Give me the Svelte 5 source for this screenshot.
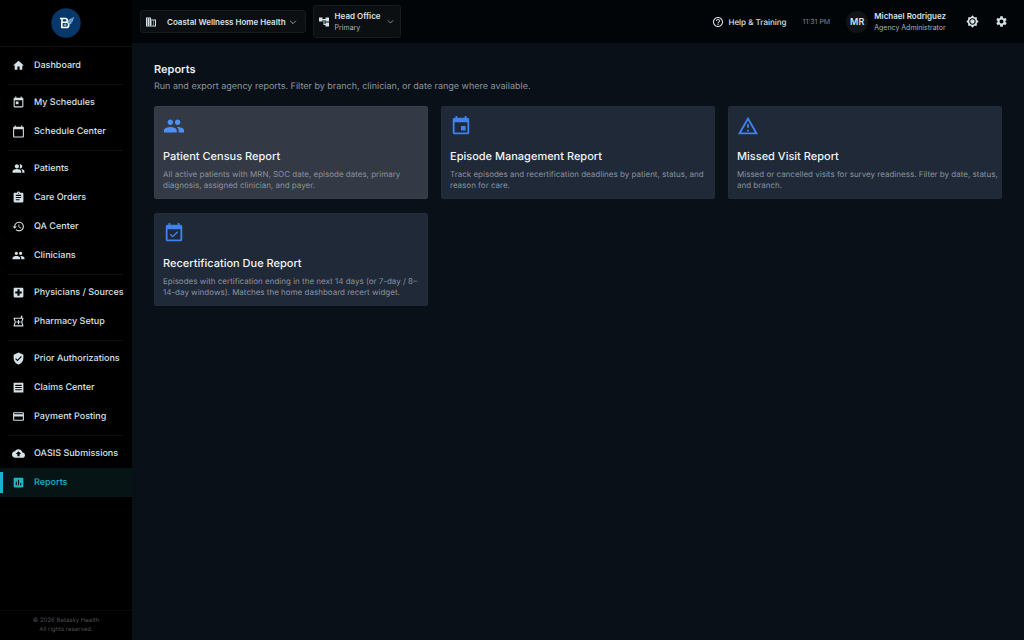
<script>
  const icons = {
    home: 'M10 20v-6h4v6h5v-8h3L12 3 2 12h3v8z',
    today: 'M19 3h-1V1h-2v2H8V1H6v2H5c-1.11 0-1.99.9-1.99 2L3 19c0 1.1.89 2 2 2h14c1.1 0 2-.9 2-2V5c0-1.100-.9-2-2-2zm0 16H5V8h14v11zM7 10h5v5H7z',
    calendar: 'M20 3h-1V1h-2v2H7V1H5v2H4c-1.100 0-2 .9-2 2v16c0 1.100.9 2 2 2h16c1.100 0 2-.9 2-2V5c0-1.100-.9-2-2-2zm0 18H4V8h16v13z',
    patients: 'M16.670 13.130C18.040 14.060 19 15.320 19 17v3h4v-3c0-2.180-3.570-3.470-6.330-3.870zM15 12c2.210 0 4-1.790 4-4s-1.790-4-4-4c-.47 0-.91.1-1.330.24C14.500 5.270 15 6.580 15 8s-.5 2.730-1.330 3.760c.42.14.86.24 1.330.24zM9 12c2.210 0 4-1.790 4-4s-1.790-4-4-4-4 1.790-4 4 1.790 4 4 4zm0 1c-2.670 0-8 1.340-8 4v3h16v-3c0-2.660-5.330-4-8-4z',
    orders: 'M19 3h-4.180C14.400 1.840 13.300 1 12 1c-1.300 0-2.400.84-2.820 2H5c-1.100 0-2 .9-2 2v14c0 1.100.9 2 2 2h14c1.100 0 2-.9 2-2V5c0-1.100-.9-2-2-2zm-7 0c.55 0 1 .45 1 1s-.45 1-1 1-1-.45-1-1 .45-1 1-1zm2 14H7v-2h7v2zm3-4H7v-2h10v2zm0-4H7V7h10v2z',
    history: 'M13 3c-4.970 0-9 4.030-9 9H1l3.890 3.890.07.14L9 12H6c0-3.870 3.130-7 7-7s7 3.130 7 7-3.130 7-7 7c-1.930 0-3.680-.79-4.940-2.060l-1.420 1.420C8.270 19.990 10.510 21 13 21c4.970 0 9-4.030 9-9s-4.030-9-9-9zm-1 5v5l4.280 2.540.72-1.210-3.500-2.080V8H12z',
    people: 'M16 11c1.660 0 2.990-1.340 2.990-3S17.660 5 16 5c-1.660 0-3 1.340-3 3s1.340 3 3 3zm-8 0c1.660 0 2.990-1.340 2.990-3S9.660 5 8 5C6.340 5 5 6.340 5 8s1.340 3 3 3zm0 2c-2.330 0-7 1.170-7 3.500V19h14v-2.500c0-2.330-4.670-3.500-7-3.500zm8 0c-.29 0-.62.02-.97.05 1.160.84 1.970 1.970 1.970 3.450V19h6v-2.500c0-2.330-4.670-3.500-7-3.500z',
    hospital: 'M19 3H5c-1.100 0-1.990.9-1.990 2L3 19c0 1.100.9 2 2 2h14c1.100 0 2-.9 2-2V5c0-1.100-.9-2-2-2zm-1 11h-4v4h-4v-4H6v-4h4V6h4v4h4v4z',
    pharmacy: 'M21 5h-2.640l1.140-3.140L17.150 1l-1.460 4H3v2l2 6-2 6v2h18v-2l-2-6 2-6V5zm-3.900 8.630L18.890 19H5.110l1.790-5.370.21-.63-.21-.63L5.110 7h13.780l-1.790 5.370-.21.63.21.63zM13 9h-2v3H8v2h3v3h2v-3h3v-2h-3z',
    verified: 'M12 1L3 5v6c0 5.550 3.840 10.740 9 12 5.160-1.260 9-6.450 9-12V5l-9-4zm-2 16l-4-4 1.410-1.410L10 14.170l6.590-6.590L18 9l-8 8z',
    claims: 'M3 3v18h18V3H3zm15 14H6v-2h12v2zm0-4H6v-2h12v2zm0-4H6V7h12v2z',
    card: 'M20 4H4c-1.110 0-1.990.89-1.990 2L2 18c0 1.110.89 2 2 2h16c1.110 0 2-.89 2-2V6c0-1.110-.89-2-2-2zm0 14H4v-6h16v6zm0-10H4V6h16v2z',
    upload: 'M19.350 10.040C18.670 6.590 15.640 4 12 4 9.110 4 6.600 5.640 5.350 8.040 2.340 8.360 0 10.910 0 14c0 3.310 2.690 6 6 6h13c2.760 0 5-2.240 5-5 0-2.640-2.050-4.780-4.650-4.960zM14 13v4h-4v-4H7l5-5 5 5h-3z',
    reports: 'M19 3H5c-1.100 0-2 .9-2 2v14c0 1.100.9 2 2 2h14c1.100 0 2-.9 2-2V5c0-1.100-.9-2-2-2zM9 17H7v-7h2v7zm4 0h-2V7h2v10zm4 0h-2v-4h2v4z',
    business: 'M12 7V3H2v18h20V7H12zM6 19H4v-2h2v2zm0-4H4v-2h2v2zm0-4H4V9h2v2zm0-4H4V5h2v2zm4 12H8v-2h2v2zm0-4H8v-2h2v2zm0-4H8V9h2v2zm0-4H8V5h2v2zm10 12h-8v-2h2v-2h-2v-2h2v-2h-2V9h8v10zm-2-8h-2v2h2v-2zm0 4h-2v2h2v-2z',
    tree: 'M22 11V3h-7v3H9V3H2v8h7V8h2v10h4v3h7v-8h-7v3h-2V8h2v3z',
    chevron: 'M5 9l7 7 7-7',
    help: 'M11 18h2v-2h-2v2zm1-16C6.480 2 2 6.480 2 12s4.480 10 10 10 10-4.480 10-10S17.520 2 12 2zm0 18c-4.410 0-8-3.590-8-8s3.590-8 8-8 8 3.590 8 8-3.590 8-8 8zm0-14c-2.210 0-4 1.790-4 4h2c0-1.100.9-2 2-2s2 .9 2 2c0 2-3 1.750-3 5h2c0-2.250 3-2.500 3-5 0-2.210-1.790-4-4-4z',
    sun: 'M20 8.690V4h-4.690L12 .69 8.690 4H4v4.690L.69 12 4 15.310V20h4.690L12 23.310 15.310 20H20v-4.690L23.310 12 20 8.690zM12 18c-3.310 0-6-2.690-6-6s2.690-6 6-6 6 2.690 6 6-2.690 6-6 6zm0-10c-2.210 0-4 1.790-4 4s1.790 4 4 4 4-1.790 4-4-1.790-4-4-4z',
    gear: 'M19.140 12.940c.04-.3.06-.61.06-.94 0-.32-.02-.64-.07-.94l2.030-1.580c.18-.14.23-.41.12-.61l-1.920-3.320c-.12-.22-.37-.29-.59-.22l-2.390.96c-.5-.38-1.030-.7-1.620-.94l-.36-2.540c-.04-.24-.24-.41-.48-.41h-3.840c-.24 0-.43.17-.47.41l-.36 2.540c-.59.24-1.130.57-1.620.94l-2.390-.96c-.22-.08-.47 0-.59.22L2.740 8.870c-.12.21-.08.47.12.61l2.030 1.580c-.05.3-.09.63-.09.94s.02.64.07.94l-2.030 1.580c-.18.14-.23.41-.12.61l1.920 3.320c.12.22.37.29.59.22l2.390-.96c.5.38 1.030.7 1.620.94l.36 2.540c.05.24.24.41.48.41h3.840c.24 0 .44-.17.47-.41l.36-2.540c.59-.24 1.130-.56 1.620-.94l2.390.96c.22.08.47 0 .59-.22l1.920-3.320c.12-.22.07-.47-.12-.61l-2.010-1.580zM12 15.600c-1.980 0-3.600-1.620-3.600-3.600s1.620-3.600 3.600-3.600 3.600 1.620 3.600 3.600-1.620 3.600-3.600 3.600z',
    event: 'M17 12h-5v5h5v-5zM16 1v2H8V1H6v2H5c-1.110 0-1.990.9-1.990 2L3 19c0 1.100.89 2 2 2h14c1.100 0 2-.9 2-2V5c0-1.100-.9-2-2-2h-1V1h-2zm3 18H5V8h14v11z',
    warning: 'M12 5.990L19.530 19H4.470L12 5.990M12 2L1 21h22L12 2zm1 14h-2v2h2v-2zm0-6h-2v4h2v-4z',
    available: 'M16.530 11.060L15.470 10l-4.880 4.880-2.120-2.120-1.060 1.060L10.590 17l5.940-5.940zM19 3h-1V1h-2v2H8V1H6v2H5c-1.110 0-1.990.9-1.990 2L3 19c0 1.100.89 2 2 2h14c1.100 0 2-.9 2-2V5c0-1.100-.9-2-2-2zm0 16H5V8h14v11z'
  };

  const groups = [
    [['home', 'Dashboard']],
    [['today', 'My Schedules'], ['calendar', 'Schedule Center']],
    [['patients', 'Patients'], ['orders', 'Care Orders'], ['history', 'QA Center'], ['people', 'Clinicians']],
    [['hospital', 'Physicians / Sources'], ['pharmacy', 'Pharmacy Setup']],
    [['verified', 'Prior Authorizations'], ['claims', 'Claims Center'], ['card', 'Payment Posting']],
    [['upload', 'OASIS Submissions'], ['reports', 'Reports']]
  ];

  const reports = [
    { icon: 'people', title: 'Patient Census Report', text: 'All active patients with MRN, SOC date, episode dates, primary diagnosis, assigned clinician, and payer.' },
    { icon: 'event', title: 'Episode Management Report', text: 'Track episodes and recertification deadlines by patient, status, and reason for care.' },
    { icon: 'warning', title: 'Missed Visit Report', text: 'Missed or cancelled visits for survey readiness. Filter by date, status, and branch.' },
    { icon: 'available', title: 'Recertification Due Report', text: 'Episodes with certification ending in the next 14 days (or 7-day / 8–14-day windows). Matches the home dashboard recert widget.' }
  ];

  let current = $state('Reports');
  let focused = $state('Patient Census Report');
</script>

{#snippet icon(name, size)}
  <svg class:line={name === 'chevron'} viewBox="0 0 24 24" width={size} height={size} fill="currentColor" aria-hidden="true"><path d={icons[name]} /></svg>
{/snippet}

<div class="app">
  <aside>
    <a class="brand" href="#home" aria-label="Home">
      <svg viewBox="0 0 30 30" width="30" height="30" aria-hidden="true">
        <circle cx="15" cy="15" r="14.700" fill="#08376a" />
        <g fill="none" stroke="#fff" stroke-width="1.600" stroke-linejoin="round">
          <path d="M9 10.500h5.500c2.300 0 2.300 3.800 0 3.800h-3.500v-3.800M11 14.300h4.500c3 0 3 5.200 0 5.200h-4.700v-5.200" />
        </g>
        <path d="M14.200 15.500v3M12.700 17h3" stroke="#b9dcf5" stroke-width=".8" />
        <path d="M16.300 14.200c1-2.600 3.200-3.400 6.700-5.200-.2 1.700-.8 2.700-2 3.400l1.300-.1c-.6 1.400-1.400 2-2.600 2.300l1 .1c-.7 1.200-1.900 1.600-3.200 1.500z" fill="#8cc4ea" />
        <path d="M17.400 14l4.300-3.700M18 15l3-2.500" stroke="#08376a" stroke-width=".5" />
      </svg>
    </a>
    <nav aria-label="Main">
      {#each groups as group}
        <ul>
          {#each group as [glyph, label]}
            <li>
              <a href="#{label}" class:active={current === label} aria-current={current === label ? 'page' : undefined} onclick={() => (current = label)}>
                {@render icon(glyph, 13)}<span>{label}</span>
              </a>
            </li>
          {/each}
        </ul>
      {/each}
    </nav>
    <footer>© 2026 Betasky Health<br />All rights reserved.</footer>
  </aside>

  <div class="page">
    <header>
      <button class="picker agency" type="button">
        {@render icon('business', 12)}<strong>Coastal Wellness Home Health</strong>{@render icon('chevron', 10)}
      </button>
      <button class="picker branch" type="button">
        {@render icon('tree', 12)}
        <span class="stack"><strong>Head Office</strong><small>Primary</small></span>
        {@render icon('chevron', 9)}
      </button>
      <div class="tools">
        <a class="help" href="#help">{@render icon('help', 12)}Help &amp; Training</a>
        <time>11:31 PM</time>
        <button class="user" type="button">
          <span class="avatar">MR</span>
          <span class="stack"><strong>Michael Rodriguez</strong><small>Agency Administrator</small></span>
        </button>
        <button class="tool" type="button" aria-label="Theme">{@render icon('sun', 13)}</button>
        <button class="tool" type="button" aria-label="Settings">{@render icon('gear', 13)}</button>
      </div>
    </header>

    <main>
      <h1>Reports</h1>
      <p class="lead">Run and export agency reports. Filter by branch, clinician, or date range where available.</p>
      <div class="cards">
        {#each reports as report}
          <a class="card" class:focused={focused === report.title} href="#{report.title}" onmouseenter={() => (focused = report.title)}>
            {@render icon(report.icon, 22)}
            <h2>{report.title}</h2>
            <p>{report.text}</p>
          </a>
        {/each}
      </div>
    </main>
  </div>
</div>

<style>
  :global(body) { margin: 0; background: #091018; }
  * { box-sizing: border-box; }
  .app {
    display: grid;
    grid-template-columns: 132px 1fr;
    min-height: 100vh;
    font-family: Inter, sans-serif;
    font-size: 9px;
    line-height: 12px;
    text-rendering: geometricPrecision;
    color: #d5e2e7;
  }
  svg { display: block; flex: none; }
  .line { fill: none; stroke: currentColor; stroke-width: 2; opacity: .8; }
  a { color: inherit; text-decoration: none; }
  button { font: inherit; color: inherit; background: none; border: 0; padding: 0; text-align: left; }
  aside { display: flex; flex-direction: column; background: #000; }
  .brand {
    display: flex;
    align-items: center;
    justify-content: center;
    height: 47px;
    border-bottom: 1px solid #101315;
  }
  nav { padding-top: 4px; flex: 1; }
  ul { list-style: none; margin: 0; padding: 0; }
  ul + ul::before { content: ''; display: block; height: 1px; margin: 4px 9px 3px 8px; background: #0e1112; }
  li a {
    display: flex;
    align-items: center;
    gap: 9px;
    height: 29px;
    padding-left: 9px;
    border-left: 3px solid transparent;
    font-weight: 500;
    white-space: nowrap;
  }
  li a.active { color: #22b1c8; background: #061416; border-image: linear-gradient(transparent 15%, #16b4d0 15% 85%, transparent 85%) 1; }
  footer {
    padding: 5px 0 6px;
    border-top: 1px solid #080a0b;
    font-size: 6px;
    line-height: 9px;
    text-align: center;
    color: #4b4f52;
  }
  .page { display: flex; flex-direction: column; min-width: 0; background: #091018; }
  header {
    display: flex;
    align-items: center;
    gap: 7px;
    height: 43px;
    padding: 0 16px 0 8px;
    background: #020507;
  }
  .picker { display: flex; align-items: center; border: 1px solid #171b1e; border-radius: 3px; background: #0c0f12; }
  .agency { gap: 10px; height: 23px; padding: 0 7px 0 4px; font-size: 8px; }
  .agency strong { margin-right: -8px; }
  .branch { gap: 5px; height: 33px; padding: 0 5px 0 4px; }
  strong { font-weight: 600; }
  .stack { display: grid; }
  .stack strong { font-size: 8px; }
  .stack small { font-size: 7px; color: #aab4b8; }
  .tools { display: flex; align-items: center; margin-left: auto; gap: 16px; }
  .help { display: flex; align-items: center; gap: 4px; font-size: 8px; font-weight: 500; }
  time { font-size: 7px; color: #7c8588; }
  .user { display: flex; align-items: center; gap: 6px; margin-right: 4px; }
  .avatar {
    display: grid;
    place-items: center;
    width: 22px;
    height: 22px;
    border-radius: 50%;
    background: #101417;
    font-weight: 600;
  }
  main { padding: 18px 22px 22px; }
  h1 { margin: 0; font-size: 11px; line-height: 16px; font-weight: 600; color: #e8edf1; }
  .lead { margin: 4px 0 13px; color: #8d969f; }
  .cards { display: grid; grid-template-columns: repeat(3, 1fr); gap: 14px 13px; }
  .card { padding: 8px 2px 7px 8px; border: 1px solid #232d3a; border-radius: 2px; background: #1f2937; color: #3f82f0; }
  .card.focused { background: #333945; border-color: #383f4a; color: #5090f3; }
  h2 { margin: 11px 0 5px; font-size: 11px; line-height: 16px; font-weight: 500; color: #f1f4f7; }
  .card p { margin: 0; font-size: 8px; line-height: 11px; color: #8b93a0; }
</style>
